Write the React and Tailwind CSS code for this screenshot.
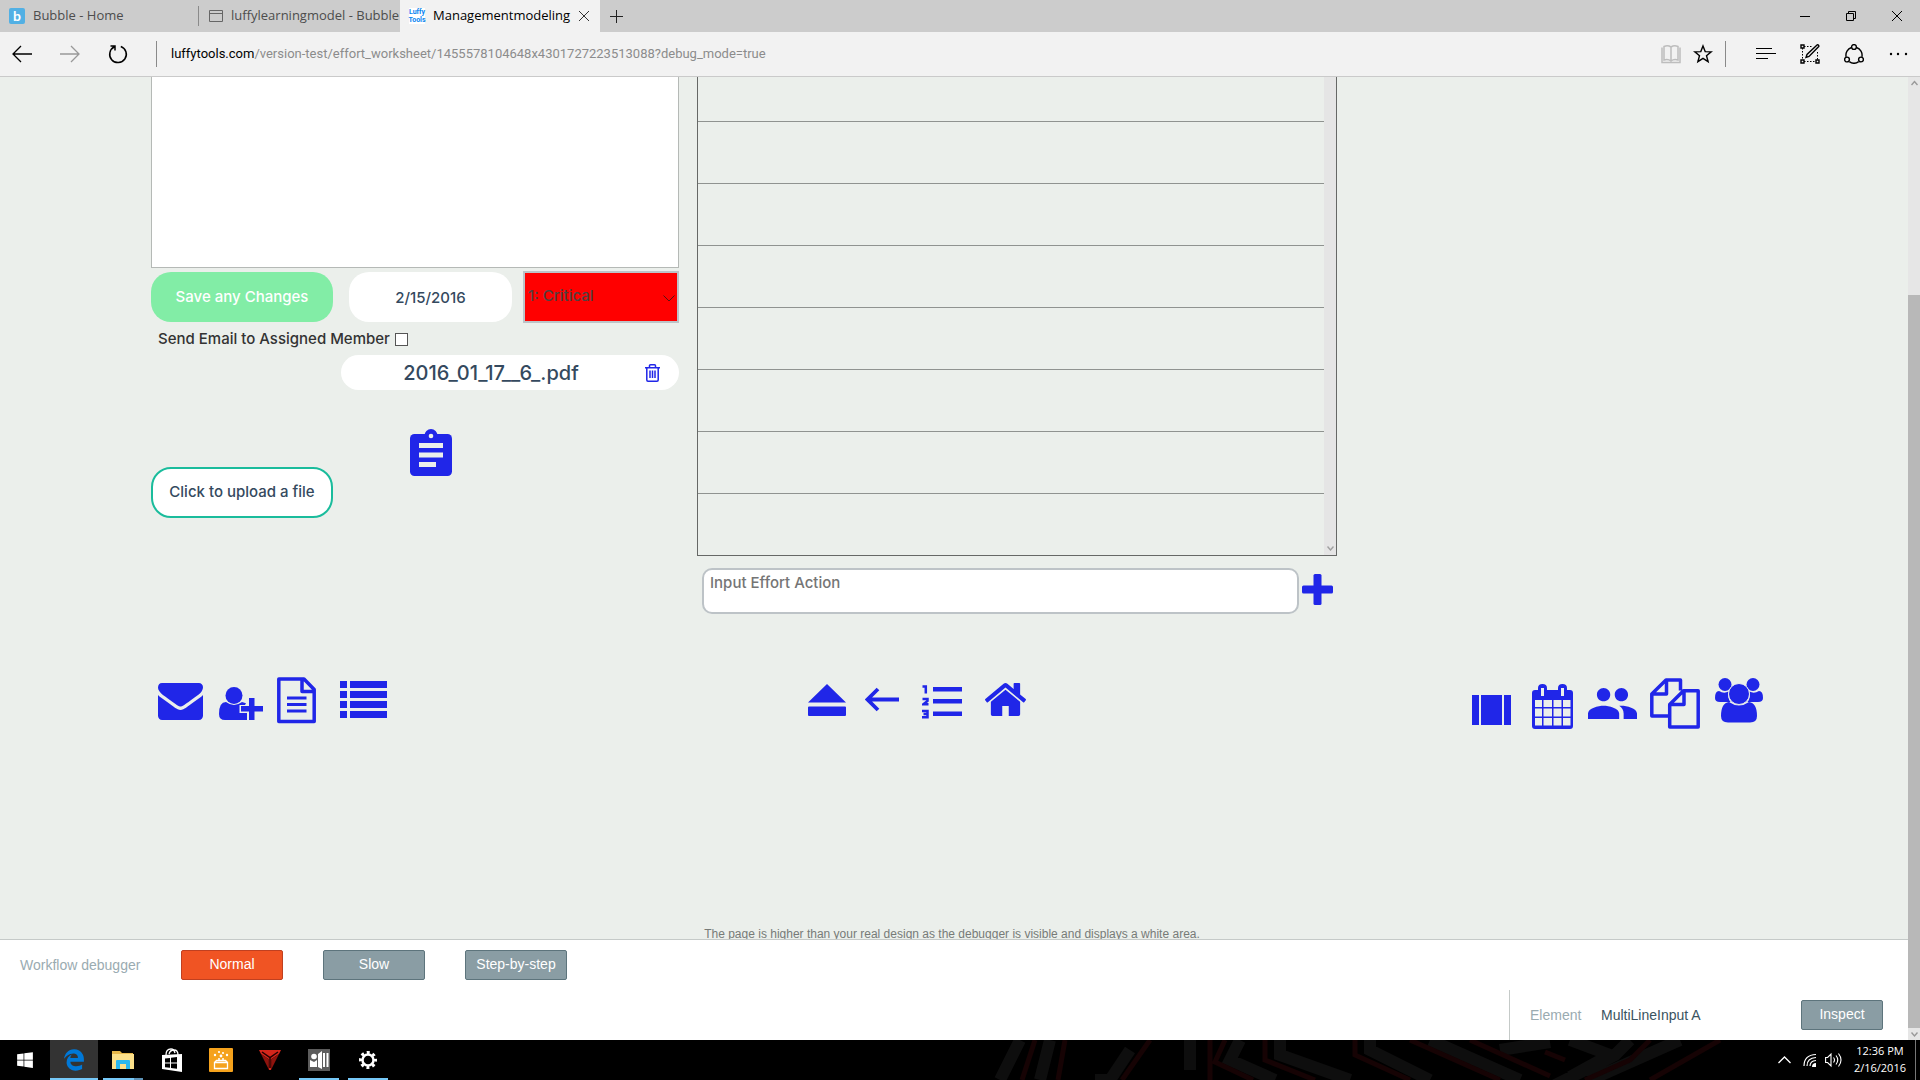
import React, { useState } from 'react';
import { FaWindows, FaEdgeLegacy } from 'react-icons/fa6';

const chromeFont = "font-['Open_Sans',sans-serif]";
const pageFont = "font-['Inter',sans-serif]";
const debugFont = "font-['Liberation_Sans',sans-serif]";

/* ---------- Browser chrome ---------- */

const TabBar = () => (
    <div className="flex h-8 shrink-0 items-stretch bg-[#cccccc] text-[13px] text-[#4d4d4d]">
        <button className="relative flex w-[199px] items-center gap-2 pl-[9px]">
            <span className="flex h-4 w-4 items-center justify-center rounded-[2px] bg-[#52b0e4] font-['Lato',sans-serif] text-[14px] font-bold leading-4 text-white">b</span>
            <span>Bubble - Home</span>
            <span className="absolute right-0 top-[6px] h-5 w-px bg-[#8a8a8a]" />
        </button>
        <button className="flex w-[201px] items-center gap-2 overflow-hidden whitespace-nowrap pl-[10px]">
            <svg width="14" height="12" viewBox="0 0 14 12" fill="none" stroke="#666" className="shrink-0">
                <path d="M.5.5h13v11H.5zM.5 3.500h13" />
            </svg>
            <span>luffylearningmodel - Bubble</span>
        </button>
        <div className="flex w-[200px] items-center bg-[#f2f2f2] pl-[9px] text-black">
            <span className="mr-2 flex h-4 w-4 flex-col items-center bg-white font-['Roboto',sans-serif] text-[7px] font-bold leading-[8px] text-[#0a84f0]">
                <span>Luffy</span>
                <span>Tools</span>
            </span>
            <button>Managementmodeling</button>
            <button aria-label="Close tab" className="ml-auto mr-[11px]">
                <svg width="10" height="10" viewBox="0 0 10 10" stroke="#333"><path d="M0 0l10 10M10 0L0 10" /></svg>
            </button>
        </div>
        <button aria-label="New tab" className="flex w-8 items-center justify-center">
            <svg width="13" height="13" viewBox="0 0 13 13" stroke="#222"><path d="M6.500 0v13M0 6.500h13" /></svg>
        </button>
        <div className="ml-auto flex">
            <button aria-label="Minimize" className="flex w-[46px] items-center justify-center">
                <svg width="10" height="10" viewBox="0 0 10 10" stroke="#000"><path d="M0 5.500h10" /></svg>
            </button>
            <button aria-label="Restore" className="flex w-[46px] items-center justify-center">
                <svg width="10" height="10" viewBox="0 0 10 10" fill="none" stroke="#000"><path d="M.5 2.500h7v7h-7zM2.500 2.500v-2h7v7h-2" /></svg>
            </button>
            <button aria-label="Close" className="flex w-[46px] items-center justify-center">
                <svg width="10" height="10" viewBox="0 0 10 10" stroke="#000"><path d="M0 0l10 10M10 0L0 10" /></svg>
            </button>
        </div>
    </div>
);

const Toolbar = () => (
    <div className="flex h-[45px] shrink-0 items-center border-b border-[#cacaca] bg-[#f2f2f2]">
        <button aria-label="Back" className="flex w-11 justify-center">
            <svg width="20" height="18" viewBox="0 0 20 18" fill="none" stroke="#000" strokeWidth="1.3"><path d="M20 9H1M9 1L1 9l8 8" /></svg>
        </button>
        <button aria-label="Forward" className="flex w-[52px] justify-center">
            <svg width="20" height="18" viewBox="0 0 20 18" fill="none" stroke="#999" strokeWidth="1.3"><path d="M0 9h19M11 1l8 8-8 8" /></svg>
        </button>
        <button aria-label="Refresh" className="flex w-11 justify-center">
            <svg width="20" height="20" viewBox="0 0 20 20" fill="none" stroke="#000" strokeWidth="1.5"><path d="M12.800 2.500a8.300 8.300 0 1 1-6.300.3M2.500 2h4.500v4.500" /></svg>
        </button>
        <span className="ml-4 h-[26px] w-px bg-[#8a8a8a]" />
        <div role="textbox" aria-label="Address" className="flex-1 whitespace-nowrap pl-[14px] font-['Roboto',sans-serif] text-[13px] text-[#8c8c8c]">
            <span className="text-black">luffytools.com</span>/version-test/effort_worksheet/1455578104648x4301727223513088?debug_mode=true
        </div>
        <button aria-label="Reading view" className="flex w-8 justify-center">
            <svg width="20" height="19" viewBox="0 0 20 19" fill="none" stroke="#bdbdbd" strokeWidth="1.500">
                <path d="M10 2v14M10 2C8 .7 5 .7 3 1.500V15c2-.6 5-.6 7 1 2-1.600 5-1.600 7-1V1.500C15 .7 12 .7 10 2zM1 2.500v15h18v-15" />
            </svg>
        </button>
        <button aria-label="Add to favorites" className="flex w-8 justify-center">
            <svg width="20" height="20" viewBox="0 0 20 20" fill="none" stroke="#000" strokeWidth="1.400">
                <path d="M10 2l2.200 5.600 6 .3-4.700 3.800 1.600 5.900L10 14.300l-5.100 3.300 1.600-5.900L1.800 7.900l6-.3z" />
            </svg>
        </button>
        <span className="ml-[6px] mr-[18px] h-[26px] w-px bg-[#8a8a8a]" />
        <button aria-label="Hub" className="flex w-11 justify-center">
            <svg width="20" height="12" viewBox="0 0 20 12" stroke="#000"><path d="M0 .5h16M0 5.500h20M0 10.500h12" /></svg>
        </button>
        <button aria-label="Make a web note" className="flex w-11 justify-center">
            <svg width="20" height="20" viewBox="0 0 20 20" fill="none" stroke="#000">
                <path strokeDasharray="1.500 1.500" d="M4 2.500h9M2.500 4v12M4 17.500h12M17.500 8v8" />
                <path strokeWidth="1.400" d="M1 1h3v3H1zM1 16h3v3H1zM16 16h3v3h-3zM6 13.500l1-3 10-9.500c1-.8 2.500.6 1.500 1.800L9 12.500z" />
            </svg>
        </button>
        <button aria-label="Share" className="flex w-11 justify-center">
            <svg width="20" height="20" viewBox="0 0 20 20" fill="none" stroke="#000" strokeWidth="1.400">
                <circle cx="10" cy="3" r="2.400" />
                <circle cx="3" cy="15.500" r="2.400" />
                <circle cx="17" cy="15.500" r="2.400" />
                <path d="M7.500 3.500a8 8 0 0 0-5.400 9.300M12.500 3.500a8 8 0 0 1 5.400 9.300M5.300 17.600a8 8 0 0 0 9.400 0" />
            </svg>
        </button>
        <button aria-label="More" className="flex w-11 justify-center">
            <svg width="20" height="4" viewBox="0 0 20 4"><circle cx="3" cy="2" r="1.200" /><circle cx="10" cy="2" r="1.200" /><circle cx="18" cy="2" r="1.200" /></svg>
        </button>
    </div>
);

/* ---------- Worksheet ---------- */

const AssignmentIcon = () => (
    <svg width="42" height="47" viewBox="0 0 42 47">
        <rect y="5" width="42" height="42" rx="4.500" />
        <circle cx="21" cy="6.500" r="6.500" />
        <g fill="#ebefeb">
            <circle cx="21" cy="7" r="2.300" />
            <path d="M9 14h24v5H9zM9 23.500h24v5H9zM9 33h17v5H9z" />
        </g>
    </svg>
);

const EffortForm = () => {
    const [date, setDate] = useState('2/15/2016');

    return (
        <section>
            <textarea aria-label="Effort description" className="block h-[191px] w-full resize-none border border-t-0 border-[#b5b9b6] bg-white" />
            <div className="mt-[3px] flex h-[52px] items-center">
                <button className="mr-4 h-[50px] w-[182px] rounded-[20px] bg-[#82eda6] text-white">Save any Changes</button>
                <input
                    aria-label="Due date"
                    value={date}
                    onChange={e => setDate(e.target.value)}
                    className="h-[50px] w-[163px] rounded-[20px] bg-white text-center"
                />
                <div className="relative ml-[11px] flex-1">
                    <select aria-label="Priority" className="block h-[52px] w-full appearance-none border-2 border-[#bdc3c7] bg-[#ff0000] pl-[3px] pb-[2px] text-[#514040]">
                        <option>1: Critical</option>
                    </select>
                    <svg width="12" height="7" viewBox="0 0 12 7" fill="none" stroke="#5a1010" className="pointer-events-none absolute right-1 top-6">
                        <path d="M.5.5L6 6 11.500.5" />
                    </svg>
                </div>
            </div>
            <div className="flex h-8 items-center gap-[5px] pl-[7px] text-[#333333]">
                <label htmlFor="send-email">Send Email to Assigned Member</label>
                <input id="send-email" type="checkbox" className="h-[13px] w-[13px] appearance-none border border-[#555555] bg-white" />
            </div>
            <div className="ml-[190px] flex h-[35px] items-center rounded-[18px] bg-white pr-[19px]">
                <a href="#file" className="flex-1 pr-1 text-center text-[20px]">2016_01_17__6_.pdf</a>
                <button aria-label="Delete file">
                    <svg width="15" height="18" viewBox="0 0 15 18" fill="none" stroke="#2026e8" strokeWidth="1.500">
                        <path d="M0 3.700h15M4.500 3.500V1.700Q4.500.8 5.500.8h4q1 0 1 .9v1.800M1.800 4v12q0 1.200 1.200 1.200h9q1.200 0 1.200-1.200V4M5 6.500v7.500M7.500 6.500v7.500M10 6.500v7.500" />
                    </svg>
                </button>
            </div>
            <div className="flex items-start">
                <button className="mt-[77px] h-[51px] w-[182px] rounded-[20px] border-2 border-[#1abc9c] bg-white">Click to upload a file</button>
                <button aria-label="Assignment" className="ml-[77px] mt-[39px] fill-[#2026e8]"><AssignmentIcon /></button>
            </div>
        </section>
    );
};

const EffortActions = () => (
    <section>
        <div className="flex h-[479px] border border-t-0 border-[#666866]">
            <ul className="flex flex-1 flex-col justify-end overflow-hidden">
                {Array.from({ length: 8 }, (_, i) => (
                    <li key={i} className="h-[62px] shrink-0 border-t border-[#8f9390]" />
                ))}
            </ul>
            <div className="flex w-3 items-end justify-center bg-[#e5e5e5] pb-1">
                <svg width="7" height="5" viewBox="0 0 7 5" fill="none" stroke="#a0a0a0" strokeWidth="1.400"><path d="M.5.5l3 3.500 3-3.500" /></svg>
            </div>
        </div>
        <div className="mt-3 flex items-start gap-[3px] pl-[5px] pr-1">
            <textarea
                aria-label="Effort action"
                placeholder="Input Effort Action"
                className="h-[46px] flex-1 resize-none rounded-[10px] border-2 border-[#bdc3c7] bg-white px-[6px] py-[3px] leading-5 placeholder:text-[#757575]"
            />
            <button aria-label="Add action" className="mt-[6px] fill-[#2026e8]">
                <svg width="31" height="31" viewBox="0 0 31 31">
                    <rect x="11.500" width="8" height="31" rx="1.500" />
                    <rect y="11.500" width="31" height="8" rx="1.500" />
                </svg>
            </button>
        </div>
    </section>
);

/* Bottom navigation, every drawing sits on a 52px tall canvas */
const IconButton = ({ label, width, children }) => (
    <button aria-label={label}>
        <svg width={width} height="52" viewBox={`0 0 ${width} 52`}>{children}</svg>
    </button>
);

const BottomNav = () => (
    <nav className="flex justify-between fill-[#2026e8] pl-[158px] pr-[145px]">
        <div className="flex gap-3">
            <IconButton label="Messages" width={49}>
                <svg x="0" y="6" width="45" height="37" viewBox="0 256 1792 1408" preserveAspectRatio="none">
                    <path d="M1792 710v794q0 66-47 113t-113 47H160q-66 0-113-47T0 1504V710q44 49 101 87 362 246 497 345 57 42 92.500 65.500T785 1255.500t110 24.500h2q51 0 110-24.500t94.500-48 92.500-65.500q170-123 498-345 57-39 100-87zm0-294q0 79-49 151t-122 123q-376 261-468 325-10 7-42.500 31t-54 38-52 31.500-57.500 27-50 9h-2q-23 0-50-9t-57.500-27-52-31.500-54-38T639 1015q-91-64-262-182.500T172 690q-62-42-117-115.500T0 438q0-78 41.500-130T160 256h1472q65 0 112.500 47t47.500 113z" />
                </svg>
            </IconButton>
            <IconButton label="Add member" width={46}>
                <circle cx="15" cy="18.500" r="8.500" />
                <path d="M7 25q8 6 16 0l4 1.200L26 28h-5.500v8H28v7H6q-6 0-6-6 0-12 7-12z" />
                <path d="M30 28v-7h5.500v8H44v5.500h-8.500V43H30v-8.500h-8V29h8z" />
            </IconButton>
            <IconButton label="Document" width={51}>
                <path fill="none" stroke="#2026e8" strokeWidth="3.500" strokeLinejoin="round" d="M1.800 2h25.200l10.200 10.500v32h-35.400zM25 2v12.500h12.500" />
                <path d="M10 19.500h19.500v3H10zM10 26h19.500v3H10zM10 32.500h19.500v3H10z" />
            </IconButton>
            <IconButton label="List" width={47}>
                <path d="M0 4h7v7H0zM10 4h37v7H10zM0 14h7v7H0zM10 14h37v7H10zM0 24h7v7H0zM10 24h37v7H10zM0 34h7v7H0zM10 34h37v7H10z" />
            </IconButton>
        </div>
        <div className="flex gap-3 pr-[26px]">
            <IconButton label="Top" width={45}>
                <path d="M19 7l19 18.500H0zM1 29.500h36q1 0 1 1v7.500q0 1-1 1H1q-1 0-1-1v-7.500q0-1 1-1z" />
            </IconButton>
            <IconButton label="Back to list" width={45}>
                <path fill="none" stroke="#2026e8" strokeWidth="3.800" d="M34 22.500H2M13 12L2.500 22.500 13 33" />
            </IconButton>
            <IconButton label="Numbered list" width={51}>
                <path d="M11 10h29v4.500H11zM11 22h29v4.500H11zM11 34.500h29v4.500H11z" />
                <path fill="none" stroke="#2026e8" strokeWidth="2.500" d="M.5 9.500h3.300V16.500M.5 22h5v2l-4 3.200h5M0 34h5.500v6.200H0M1.500 37h4" />
            </IconButton>
            <IconButton label="Home" width={41}>
                <svg x="0" y="6" width="41" height="33" viewBox="89 253 1614 1283" preserveAspectRatio="none">
                    <path d="M1472 992v480q0 26-19 45t-45 19h-384v-384H768v384H384q-26 0-45-19t-19-45V992q0-1 .5-3t.5-3l575-474 575 474q1 2 1 6zm223-69l-62 74q-8 9-21 11h-3q-13 0-21-7L896 424l-692 577q-12 8-24 7-13-2-21-11l-62-74q-8-10-7-23.500T101 878l719-599q32-26 76-26t76 26l244 204V288q0-14 9-23t23-9h192q14 0 23 9t9 23v408l219 182q10 8 11 21.500t-7 23.500z" />
                </svg>
            </IconButton>
        </div>
        <div className="flex gap-3">
            <IconButton label="Carousel" width={48}>
                <path d="M0 18h7v30H0zM9 18h21v30H9zM32 18h7v30h-7z" />
            </IconButton>
            <IconButton label="Calendar" width={44}>
                <path fillRule="evenodd" d="M3 13h3v-2q0-4 4.500-4t4.500 4v2h11v-2q0-4 4.500-4t4.500 4v2h3q3 0 3 3v33q0 3-3 3H3q-3 0-3-3V16q0-3 3-3zm6-2v8h3v-8zm20 0v8h3v-8zM3 23v7h7v-7zm8.500 0v7h8.500v-7zm10 0v7h8v-7zm9.500 0v7h7.500v-7zM3 31.500v8h7v-8zm8.500 0v8h8.500v-8zm10 0v8h8v-8zm9.500 0v8h7.500v-8zM3 41v7.500h7V41zm8.500 0v7.500h8.500V41zm10 0v7.500h8V41zm9.500 0v7.500h7.500V41z" />
            </IconButton>
            <IconButton label="People" width={50}>
                <svg x="0" y="11" width="49" height="31" viewBox="1 5 22 14" preserveAspectRatio="none">
                    <path d="M16 11c1.660 0 2.990-1.340 2.990-3S17.660 5 16 5c-1.660 0-3 1.340-3 3s1.340 3 3 3zm-8 0c1.660 0 2.990-1.340 2.990-3S9.660 5 8 5C6.340 5 5 6.340 5 8s1.340 3 3 3zm0 2c-2.330 0-7 1.170-7 3.500V19h14v-2.500c0-2.330-4.670-3.500-7-3.500zm8 0c-.29 0-.62.02-.97.05 1.160.84 1.970 1.970 1.970 3.450V19h6v-2.500c0-2.330-4.670-3.500-7-3.500z" />
                </svg>
            </IconButton>
            <IconButton label="Files" width={53}>
                <path fill="none" stroke="#2026e8" strokeWidth="3.500" strokeLinejoin="round" d="M19 39H1.800V17L16 3h14.500v10.500M16.500 3v14H2M33.500 13.800h14.700V50H19.700V27.500zM34 13.800v13.700H19.700" />
            </IconButton>
            <IconButton label="Groups" width={48}>
                <circle cx="10" cy="7.500" r="6.500" />
                <circle cx="38" cy="7.500" r="6.500" />
                <path d="M4 14q5 3 9.500.5-1.500 6 2 10.500H5q-5 0-5-4 0-7 4-7zM44 14q-5 3-9.500.5 1.500 6-2 10.500H43q5 0 5-4 0-7-4-7z" />
                <circle cx="24" cy="17" r="10.500" stroke="#ebefeb" />
                <path d="M14 25q10 7 20 0 8 1 8 14 0 6.500-7 6.500H13q-7 0-7-6.500 0-13 8-14z" />
            </IconButton>
        </div>
    </nav>
);

/* ---------- Workflow debugger ---------- */

const Debugger = () => (
    <footer className={`flex h-[101px] shrink-0 flex-col justify-between border-t border-[#c5cac8] bg-white text-[14px] ${debugFont}`}>
        <div className="flex items-center gap-10 pl-5 pt-[10px]">
            <span className="w-[121px] text-[#9aabb1]">Workflow debugger</span>
            <button className="h-[30px] w-[102px] rounded-[2px] border border-[#c04020] bg-[#f05423] pb-[2px] text-white">Normal</button>
            <button className="h-[30px] w-[102px] rounded-[2px] border border-[#5d747c] bg-[#8a9da4] pb-[2px] text-white">Slow</button>
            <button className="h-[30px] w-[102px] rounded-[2px] border border-[#5d747c] bg-[#8a9da4] pb-[2px] text-white">Step-by-step</button>
        </div>
        <div className="flex h-[50px] w-[399px] items-center self-end border-l border-[#c5cac8] pl-5 pr-[25px]">
            <span className="w-[71px] text-[#9aabb1]">Element</span>
            <span className="flex-1 text-[#3a5360]">MultiLineInput A</span>
            <button className="h-[30px] w-[82px] rounded-[2px] border border-[#5d747c] bg-[#8a9da4] pb-[2px] text-white">Inspect</button>
        </div>
    </footer>
);

const Scrollbar = () => (
    <div className="flex w-3 shrink-0 flex-col items-center bg-[#e6e6e6]">
        <svg width="7" height="12" viewBox="0 0 7 12" fill="none" stroke="#999" strokeWidth="1.400"><path d="M.5 8l3-3.500 3 3.500" /></svg>
        <div className="mt-[206px] w-full flex-1 bg-[#b8b8b8]" />
        <svg width="7" height="12" viewBox="0 0 7 12" fill="none" stroke="#999" strokeWidth="1.400"><path d="M.5 4.500l3 3.500 3-3.500" /></svg>
    </div>
);

/* ---------- Windows taskbar ---------- */

const taskbarItems = [
    {
        name: 'Edge',
        cell: 'bg-[#333333]',
        line: 'left-0 w-12',
        icon: <FaEdgeLegacy size={22} color="#0078d7" />,
    },
    {
        name: 'File Explorer',
        line: 'left-1 w-10 border-r-[9px] border-[#5d93b8]',
        icon: (
            <svg width="22" height="20" viewBox="0 0 22 20">
                <path fill="#e8b84a" d="M0 1h8l2 2h11v5H0z" />
                <path fill="#fce08a" d="M0 4h22v15H0z" />
                <path fill="#2bb8ee" d="M4 11q0-1 1-1h12q1 0 1 1v8h-4v-5H8v5H4z" />
            </svg>
        ),
    },
    {
        name: 'Store',
        icon: (
            <svg width="22" height="24" viewBox="0 0 22 24">
                <path fill="none" stroke="#fff" strokeWidth="1.300" d="M5 7q0-6 5-6 3 0 4 4M8 6q1-4 5-4 4 0 4 5" />
                <path fill="#fff" d="M1 7l20-1v18L1 21z" />
                <path fill="#000" d="M4 10.500l5-.6v4.600H4zM10 9.800l6-.7v5.400h-6zM4 15.500h5v4.300l-5-.6zM10 15.500h6v5.300l-6-.8z" />
            </svg>
        ),
    },
    {
        name: 'Loot box',
        icon: (
            <svg width="24" height="24" viewBox="0 0 24 24">
                <rect width="24" height="24" rx="1" fill="#f5a21c" />
                <path fill="none" stroke="#fff" strokeWidth="1.300" d="M5.500 14.500h13v6h-13zM5.500 14.500l2-2h9l2 2" />
                <g fill="#fff">
                    <circle cx="6" cy="7" r="1.200" /><circle cx="10" cy="4" r="1.100" /><circle cx="14" cy="5" r="1.100" />
                    <circle cx="18" cy="7" r="1.200" /><circle cx="12" cy="8" r="1.400" /><circle cx="10" cy="11" r="1" /><circle cx="14" cy="11" r="1" />
                </g>
            </svg>
        ),
    },
    {
        name: 'Gaming center',
        icon: (
            <svg width="22" height="20" viewBox="0 0 22 20">
                <path fill="#d3261b" d="M0 0h22l-2 4-7.500 5L12 20h-2L9.500 9 2 4z" />
                <path fill="#8e130d" d="M2 4l7.500 5L10 20zM20 4l-7.500 5L12 20z" />
                <path fill="none" stroke="#200" strokeWidth="1.500" d="M3 2l8 5.500L19 2M11 7.500V18" />
            </svg>
        ),
    },
    {
        name: 'Contacts',
        line: 'left-1 w-10',
        icon: (
            <svg width="22" height="22" viewBox="0 0 22 22">
                <rect width="22" height="22" fill="#5c5c5c" />
                <circle cx="6" cy="7.500" r="2.800" fill="#fff" />
                <path fill="#fff" d="M2 11l4 2 3-2v7H2zM10 5l4-3v18l-4-2zM15 4h2v14h-2zM18.500 4h2v14h-2z" />
            </svg>
        ),
    },
    {
        name: 'Settings',
        line: 'left-1 w-10',
        icon: (
            <svg width="20" height="20" viewBox="0 0 20 20" fill="none" stroke="#fff">
                <circle cx="10" cy="10" r="5.500" strokeWidth="2.500" />
                <circle cx="10" cy="10" r="7.500" strokeWidth="3" strokeDasharray="2.945 2.945" strokeDashoffset="1.470" />
            </svg>
        ),
    },
];

const Taskbar = () => (
    <div className={`relative flex h-10 shrink-0 items-stretch gap-px overflow-hidden bg-black text-[11px] text-white ${chromeFont}`}>
        {/* Dim wallpaper pattern seen through the bar */}
        <svg className="absolute right-0 top-0" width="960" height="40" viewBox="0 0 960 40" fill="none" aria-hidden="true">
            <g stroke="#0e0e0e" strokeWidth="12">
                <path d="M60 0L40 40M90 0L80 40M170 10l-20 30h-15M230 0v30M280 0l-10 20 45 20M320 0v15l70 25M410 0v10l60 30M470 0l90 40M540 10l50-8M610 0l40 15-40 22M670 0l-15 15-60 30M720 0l-90 40" />
            </g>
            <g stroke="#160304" strokeWidth="5">
                <path d="M75 0L62 40M105 0L98 40M190 0l-28 40M250 0v40M265 0l-10 22 38 18M305 0v20l50 20M395 0v15l55 25M450 0l90 40M510 0l80 36M585 12l20 8M690 0l-20 20-45 20M760 0l-70 40" />
            </g>
        </svg>
        <button aria-label="Start" className="relative flex w-[49px] items-center justify-center"><FaWindows size={18} /></button>
        {taskbarItems.map(item => (
            <button key={item.name} aria-label={item.name} className={`relative flex w-12 items-center justify-center ${item.cell || ''}`}>
                {item.icon}
                {item.line && <span className={`absolute bottom-0 h-[2px] bg-[#76c8f7] ${item.line}`} />}
            </button>
        ))}
        <div className="relative ml-auto flex items-center">
            <button aria-label="Show hidden icons" className="mr-3">
                <svg width="13" height="8" viewBox="0 0 13 8" fill="none" stroke="#fff" strokeWidth="1.300"><path d="M.5 7l6-6 6 6" /></svg>
            </button>
            <button aria-label="Network" className="mr-2">
                <svg width="14" height="14" viewBox="0 0 14 14" fill="none" stroke="#fff" strokeWidth="1.200">
                    <path d="M1 13Q1 2 13 1.500M4 13q0-8 9-8.500M7 13q0-5 6-5.500" /><path fill="#fff" stroke="none" d="M9 14q0-4 4-4v4z" />
                </svg>
            </button>
            <button aria-label="Volume" className="mr-3">
                <svg width="17" height="16" viewBox="0 0 17 16" fill="none" stroke="#fff" strokeWidth="1.100">
                    <path d="M.6 5.500h2L6 2v12l-3.400-3.500h-2zM8.500 5.500q2 2.500 0 5M11 3.500q3.500 4.500 0 9M13.500 1.500q5 6.500 0 13" />
                </svg>
            </button>
            <div className="flex flex-col items-center pb-[2px] leading-[17px]">
                <span>12:36 PM</span>
                <span>2/16/2016</span>
            </div>
            <span className="ml-[9px] mr-1 h-10 w-px bg-[#777777]" />
        </div>
    </div>
);

export default function App() {
    return (
        <div className={`flex h-screen flex-col overflow-hidden ${chromeFont}`}>
            <TabBar />
            <Toolbar />
            <div className="flex min-h-0 flex-1">
                <div className="flex min-w-0 flex-1 flex-col">
                    <main className={`flex min-h-0 flex-1 flex-col overflow-hidden bg-[#ebefeb] text-[15px] font-medium text-[#34495e] ${pageFont}`}>
                        <div className="mb-[63px] grid grid-cols-[66fr_80fr_51fr] gap-[18px] pl-[151px] pr-[145px]">
                            <EffortForm />
                            <EffortActions />
                        </div>
                        <BottomNav />
                        <p className={`mt-auto h-[13px] pr-1 text-center text-[12px] font-normal leading-4 text-[#777b78] ${debugFont}`}>
                            The page is higher than your real design as the debugger is visible and displays a white area.
                        </p>
                    </main>
                    <Debugger />
                </div>
                <Scrollbar />
            </div>
            <Taskbar />
        </div>
    );
}
